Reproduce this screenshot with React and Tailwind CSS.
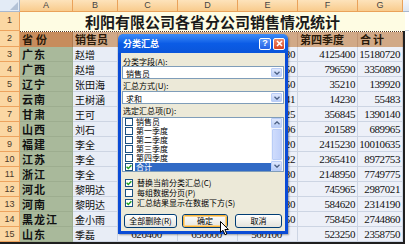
import React from "react";

const CJK = "font-['Noto_Sans_CJK_SC',sans-serif]";
const NUM = "font-['Liberation_Serif',serif]";

const cols = [
  { w: "w-[53px]", label: "A" },
  { w: "w-[45px]", label: "B" },
  { w: "w-[60px]", label: "C" },
  { w: "w-[60px]", label: "D" },
  { w: "w-[60px]", label: "E" },
  { w: "w-[60px]", label: "F" },
  { w: "w-[45px]", label: "G" },
];

const data = [
  ["广东", "赵增", "", "", "3564380", "4125400", "15180720"],
  ["广西", "赵增", "", "", "849650", "796590", "3350890"],
  ["辽宁", "张田海", "", "", "34050", "35210", "139920"],
  ["云南", "王树涵", "", "", "13241", "14230", "55483"],
  ["甘肃", "王可", "", "", "344625", "356845", "1390140"],
  ["山西", "刘石", "", "", "165596", "201589", "689965"],
  ["福建", "李全", "", "", "2515420", "2415230", "10010635"],
  ["江苏", "李全", "", "", "2195522", "2365410", "8972753"],
  ["浙江", "李全", "", "", "1968280", "2148950", "7749775"],
  ["河北", "黎明达", "", "", "749290", "745965", "2987021"],
  ["河南", "黎明达", "", "", "556880", "584620", "2314190"],
  ["黑龙江", "金小雨", "", "", "628350", "758450", "2744860"],
  ["山东", "季磊", "620400", "650000", "560100", "523250", "2358750"],
];

function Check({ checked }) {
  return (
    <div className="w-[8px] h-[8px] shrink-0 bg-white border border-[#1c5180] flex items-center justify-center">
      {checked && (
        <svg width="6" height="6" viewBox="0 0 6 6">
          <path d="M0.6 2.8 L2.3 4.5 L5.4 1.2" stroke="#21a121" strokeWidth="1.4" fill="none" />
        </svg>
      )}
    </div>
  );
}

function DropBtn({ up }) {
  return (
    <div className="w-[11px] h-full shrink-0 rounded-[1px] border border-[#b9cdf7] bg-linear-to-b from-[#dfe8fd] to-[#b9cdf6] flex items-center justify-center">
      <svg width="6" height="4" viewBox="0 0 6 4">
        <path d={up ? "M0.5 3.3 L3 0.8 L5.5 3.3" : "M0.5 0.7 L3 3.2 L5.5 0.7"} stroke="#4d6185" strokeWidth="1.3" fill="none" />
      </svg>
    </div>
  );
}

function Select({ value }) {
  return (
    <div className="h-[13px] bg-white border border-[#7f9db9] flex items-stretch p-[1px]">
      <div className={`flex-1 pl-[2px] text-[8px] leading-[11px] text-black ${CJK}`}>{value}</div>
      <DropBtn />
    </div>
  );
}

function XPButton({ w, children, focus }) {
  return (
    <div className={`${w} h-[14px] rounded-[3px] border border-[#003c74] bg-linear-to-b from-[#ffffff] to-[#e4e3dc] flex items-center justify-center`}>
      <div className={`w-full h-full rounded-[2px] flex items-center justify-center text-[8px] leading-[8px] text-black ${CJK} ${focus ? "border border-[#f8b33a] shadow-[inset_0_0_0_1px_#fcd58d]" : ""}`}>
        {children}
      </div>
    </div>
  );
}

export default function App() {
  const listItems = ["销售员", "第一季度", "第二季度", "第三季度", "第四季度", "合计"];
  return (
    <div className="relative w-[409px] h-[245px] overflow-hidden bg-white">
      {/* column header row */}
      <div className="flex h-[12px]">
        <div className="w-[20px] h-full bg-[#e3ebf6] border-r border-b border-[#a9b8ce] relative">
          <svg className="absolute right-[1px] bottom-[1px]" width="8" height="8" viewBox="0 0 8 8">
            <path d="M8 0 L8 8 L0 8 Z" fill="#b3c2d7" />
          </svg>
        </div>
        {cols.map((c) => (
          <div
            key={c.label}
            className={`${c.w} h-full shrink-0 bg-linear-to-b from-[#fde3bb] to-[#f8cb8c] border-r border-b border-[#eaa25a] flex items-center justify-center text-[9px] leading-[9px] text-[#444] font-['Liberation_Sans',sans-serif]`}
          >
            {c.label}
          </div>
        ))}
        <div className="flex-1 h-full bg-linear-to-b from-[#f3f6fb] to-[#dde6f2] border-b border-[#a9b8ce]" />
      </div>

      {/* row 1 */}
      <div className="flex h-[19px]">
        <div className="w-[20px] h-full shrink-0 bg-[#fbd7a3] border-r border-b border-[#eda35e] flex items-center justify-center text-[9px] text-[#4a3a2a] font-['Liberation_Sans',sans-serif]">
          1
        </div>
        <div className={`w-[385px] h-full shrink-0 bg-[#fefce3] flex items-center justify-center text-[15px] leading-[15px] font-bold text-[#1a1a1a] ${CJK}`}>
          利阳有限公司各省分公司销售情况统计
        </div>
        <div className="flex-1 h-full bg-white border-b border-[#d0d7e5]" />
      </div>

      {/* rows 2 - 15 */}
      <div className="flex">
        <div className="w-[20px] shrink-0 flex flex-col">
          {Array.from({ length: 14 }, (_, i) => (
            <div
              key={i}
              className={`${i === 0 ? "h-[16px]" : "h-[15px]"} shrink-0 bg-[#fbd7a3] border-r border-b border-[#eda35e] flex items-center justify-center text-[9px] leading-[9px] text-[#4a3a2a] font-['Liberation_Sans',sans-serif]`}
            >
              {i + 2}
            </div>
          ))}
          <div className="h-[2px] bg-[#1f1f1f]" />
        </div>
        <div className="flex flex-col">
          <div className="w-[385px] border-r-2 border-b-2 border-[#1f1f1f] flex flex-col">
            {/* header row 2 */}
            <div className="flex h-[16px] border-t border-dotted border-[#5a3c20]">
              <div className={`w-[53px] h-full shrink-0 bg-[#c78c5c] border-r border-[#b07a4e] pl-[2px] flex items-center text-[11px] font-bold tracking-[3px] text-[#2a1a0a] ${CJK}`}>
                省份
              </div>
              {["销售员", "第一季度", "第二季度", "第三季度", "第四季度", "合计"].map((t, i) => (
                <div
                  key={t}
                  className={`${cols[i + 1].w} h-full shrink-0 bg-[#d1a987] border-r border-[#bf9574] pl-[2px] flex items-center text-[11px] font-bold text-[#2a1a0a] whitespace-nowrap overflow-hidden ${i === 5 ? "tracking-[2px]" : ""} ${CJK}`}
                >
                  {t}
                </div>
              ))}
            </div>
            {data.map((r, ri) => (
              <div key={ri} className="flex h-[15px]">
                <div className={`w-[53px] h-full shrink-0 bg-[#a9b99b] border-r border-b border-[#9dad8f] pl-[2px] flex items-center text-[11px] font-bold tracking-[1px] text-[#111] ${CJK}`}>
                  {r[0]}
                </div>
                <div className={`w-[45px] h-full shrink-0 bg-[#e8edf6] border-r border-b border-[#cdd5e3] pl-[2px] flex items-center text-[10px] text-[#111] ${CJK}`}>
                  {r[1]}
                </div>
                {r.slice(2).map((v, ci) => (
                  <div
                    key={ci}
                    className={`${cols[ci + 2].w} h-full shrink-0 bg-[#edf0f8] border-r border-b border-[#cdd5e3] pr-[2px] flex items-center ${ri === 12 && ci < 3 ? "justify-center" : "justify-end"} text-[11px] tracking-[-0.4px] text-[#111] ${NUM}`}
                  >
                    {v}
                  </div>
                ))}
              </div>
            ))}
          </div>
        </div>
        <div className="flex-1 bg-white" />
      </div>

      {/* dialog */}
      <div className="absolute left-[118px] top-[34px] w-[170px] h-[200px] flex flex-col rounded-t-[5px] overflow-hidden shadow-[1px_1px_2px_rgba(0,0,0,0.35)]">
        <div className="h-[19px] shrink-0 bg-linear-to-b from-[#3d8df8] via-[#0b5ce6] to-[#0a55da] flex items-center pl-[5px] pr-[3px]">
          <div className={`flex-1 text-[9px] leading-[9px] font-bold text-white ${CJK}`}>分类汇总</div>
          <div className="w-[12px] h-[12px] rounded-[2px] border border-white bg-linear-to-b from-[#5b95f8] to-[#2461e6] flex items-center justify-center text-white text-[9px] leading-[9px] font-bold font-['Liberation_Sans',sans-serif]">
            ?
          </div>
          <div className="ml-[2px] w-[12px] h-[12px] rounded-[2px] border border-white bg-linear-to-b from-[#ec8a6a] to-[#d9431d] flex items-center justify-center">
            <svg width="7" height="7" viewBox="0 0 7 7">
              <path d="M1 1 L6 6 M6 1 L1 6" stroke="white" strokeWidth="1.6" />
            </svg>
          </div>
        </div>
        <div className="flex-1 bg-[#ece9d8] border-x-[3px] border-b-[3px] border-[#0a4bd6] flex flex-col pl-[1px] pr-[1px] pt-[4px]">
          <div className={`h-[9px] pl-[1px] text-[8px] leading-[9px] text-black ${CJK}`}>分类字段(A):</div>
          <Select value="销售员" />
          <div className={`mt-[2px] h-[9px] pl-[1px] text-[8px] leading-[9px] text-black ${CJK}`}>汇总方式(U):</div>
          <div className="mt-[1px]">
            <Select value="求和" />
          </div>
          <div className={`mt-[2px] h-[9px] pl-[1px] text-[8px] leading-[9px] text-black ${CJK}`}>选定汇总项(D):</div>
          <div className="mt-[2px] h-[55px] bg-white border border-[#7f9db9] flex">
            <div className="flex-1 flex flex-col pl-[2px] pt-[0px]">
              {listItems.map((t, i) => (
                <div key={t} className="h-[9px] flex items-center">
                  <Check checked={i === 5} />
                  <div
                    className={`ml-[2px] h-[8px] flex-1 pl-[1px] text-[8px] leading-[8px] ${CJK} ${i === 5 ? "bg-[#316ac5] text-white" : "text-black"}`}
                  >
                    {t}
                  </div>
                </div>
              ))}
            </div>
            <div className="w-[12px] flex flex-col bg-[#f2f5fc]">
              <div className="h-[10px]">
                <DropBtn up />
              </div>
              <div className="flex-1 m-[1px] rounded-[1px] border border-[#b9cdf7] bg-linear-to-r from-[#cfdcfc] to-[#bfd0fa]" />
              <div className="h-[10px]">
                <DropBtn />
              </div>
            </div>
          </div>
          <div className="mt-[6px] flex flex-col pl-[3px]">
            {[
              ["替换当前分类汇总(C)", true],
              ["每组数据分页(P)", false],
              ["汇总结果显示在数据下方(S)", true],
            ].map(([t, c]) => (
              <div key={t} className="h-[10px] flex items-center">
                <Check checked={c} />
                <div className={`ml-[4px] text-[8px] leading-[8px] text-black ${CJK}`}>{t}</div>
              </div>
            ))}
          </div>
          <div className="mt-[6px] flex">
            <div className="ml-[2px]">
              <XPButton w="w-[53px]">全部删除(R)</XPButton>
            </div>
            <div className="ml-[5px]">
              <XPButton w="w-[46px]" focus>
                确定
              </XPButton>
            </div>
            <div className="ml-[7px]">
              <XPButton w="w-[47px]">取消</XPButton>
            </div>
          </div>
        </div>
      </div>

      {/* mouse cursor */}
      <svg className="absolute left-[220px] top-[221px]" width="10" height="15" viewBox="0 0 10 15">
        <path d="M0.5 0.5 L0.5 11.5 L3 9.2 L5 13.8 L6.8 13 L4.9 8.5 L8.4 8.5 Z" fill="white" stroke="black" strokeWidth="1" strokeLinejoin="round" />
      </svg>
    </div>
  );
}
